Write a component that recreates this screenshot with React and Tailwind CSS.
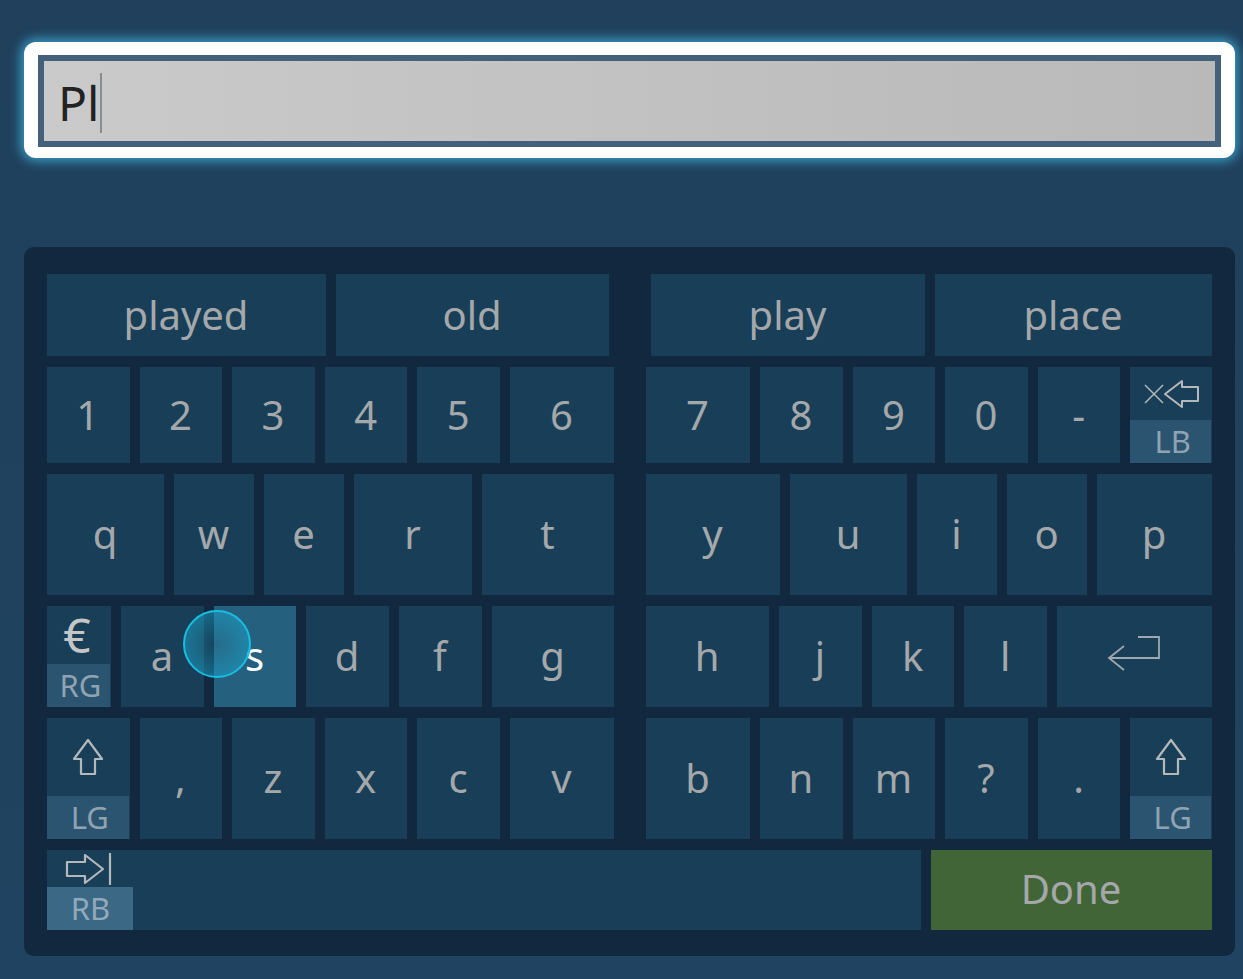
const font = { fontFamily: '"Noto Sans", sans-serif' };

const BackspaceIcon = () => (
  <svg width="56" height="32" viewBox="0 0 56 32" fill="none" stroke="#b4b8bb" strokeWidth="2">
    <path d="M2 7 L20 25 M20 7 L2 25" strokeWidth="1.5" />
    <path d="M22 16 L39 3 V9 H55 V23 H39 V29 Z" strokeLinejoin="round" />
  </svg>
);

const ShiftIcon = () => (
  <svg width="32" height="38" viewBox="0 0 32 38" fill="none" stroke="#b4b8bb" strokeWidth="2.2">
    <path d="M16 2 L30 21 H23 V36 H9 V21 H2 Z" strokeLinejoin="round" />
  </svg>
);

const TabIcon = () => (
  <svg width="48" height="32" viewBox="0 0 48 32" fill="none" stroke="#b4b8bb" strokeWidth="2.2">
    <path d="M2 9 H20 V2 L38 16 L20 30 V23 H2 Z" strokeLinejoin="round" />
    <path d="M45 0 V32" />
  </svg>
);

const EnterIcon = () => (
  <svg width="54" height="36" viewBox="0 0 54 36" fill="none" stroke="#9fa8ae" strokeWidth="1.8">
    <path d="M31 2 H52 V23 H2 M17 11 L2 23 L17 35" />
  </svg>
);

const Key = ({ w, label, className = "pb-[1px]" }) => (
  <div className={`${w} flex items-center justify-center bg-[#193f58] pr-[1px] text-[40px] leading-none text-[#a5a8aa] ${className}`}>
    {label}
  </div>
);

// key with a gamepad hint strip along the bottom
const HintKey = ({ w, icon, hint }) => (
  <div className={`${w} flex flex-col bg-[#193f58]`}>
    <div className="flex flex-1 items-center justify-center">{icon}</div>
    <div className="mr-[1px] flex h-[43px] items-center justify-center bg-[#2b5470] pl-[4px] text-[31px] leading-none text-[#8fa3b2]">
      {hint}
    </div>
  </div>
);

const Half = ({ children }) => <div className="flex gap-[10px]">{children}</div>;

export default function App() {
  return (
    <div
      style={font}
      className="h-[979px] w-[1243px] overflow-hidden bg-gradient-to-b from-[#20405c] to-[#1f4360] pl-[24px] pr-[8px] pt-[42px]"
    >
      <div className="h-[116px] rounded-[12px] bg-white px-[14px] py-[13px] shadow-[0_0_12px_3px_#3b9fc7]">
        <div className="h-[92px] border-[6px] border-[#45607a]">
          <div className="flex h-full items-center bg-gradient-to-r from-[#cacaca] to-[#b9b9b9] pl-[14px] pt-[4px] text-[48px] leading-none text-[#222]">
            <span>Pl</span>
            <div className="ml-[1px] h-[60px] w-[2px] bg-[#8a8d90]" />
          </div>
        </div>
      </div>

      <div className="relative mt-[89px] flex h-[709px] flex-col gap-[11px] rounded-[10px] bg-[#11283f] px-[23px] pt-[27px]">
        <div className="flex h-[82px] justify-between">
          <Half>
            <Key w="w-[279px]" label="played" />
            <Key w="w-[273px]" label="old" />
          </Half>
          <Half>
            <Key w="w-[274px]" label="play" />
            <Key w="w-[277px]" label="place" />
          </Half>
        </div>

        <div className="flex h-[96px] justify-between">
          <Half>
            <Key w="w-[82.6px]" label="1" />
            <Key w="w-[82.6px]" label="2" />
            <Key w="w-[82.6px]" label="3" />
            <Key w="w-[82.6px]" label="4" />
            <Key w="w-[82.6px]" label="5" />
            <Key w="w-[104px]" label="6" />
          </Half>
          <Half>
            <Key w="w-[104px]" label="7" />
            <Key w="w-[82.6px]" label="8" />
            <Key w="w-[82.6px]" label="9" />
            <Key w="w-[82.6px]" label="0" />
            <Key w="w-[82.6px]" label="-" />
            <HintKey w="w-[81.6px]" icon={<BackspaceIcon />} hint="LB" />
          </Half>
        </div>

        <div className="flex h-[121px] justify-between">
          <Half>
            <Key w="w-[117px]" label="q" />
            <Key w="w-[80px]" label="w" />
            <Key w="w-[80px]" label="e" />
            <Key w="w-[118px]" label="r" />
            <Key w="w-[132px]" label="t" />
          </Half>
          <Half>
            <Key w="w-[134px]" label="y" />
            <Key w="w-[117px]" label="u" />
            <Key w="w-[80px]" label="i" />
            <Key w="w-[80px]" label="o" />
            <Key w="w-[115px]" label="p" />
          </Half>
        </div>

        <div className="flex h-[101px] justify-between">
          <Half>
            <HintKey
              w="w-[64px]"
              icon={<span className="pr-[4px] text-[48px] leading-none text-[#c4c6c8]">€</span>}
              hint="RG"
            />
            <Key w="w-[83px]" label="a" />
            <Key w="w-[82px]" label="s" className="bg-[#25607f] pb-[1px] !text-white" />
            <Key w="w-[83px]" label="d" />
            <Key w="w-[83px]" label="f" />
            <Key w="w-[122px]" label="g" />
          </Half>
          <Half>
            <Key w="w-[123px]" label="h" />
            <Key w="w-[82.6px]" label="j" />
            <Key w="w-[82.6px]" label="k" />
            <Key w="w-[82.6px]" label="l" />
            <Key w="w-[155px]" label={<EnterIcon />} className="pb-[8px]" />
          </Half>
        </div>

        <div className="flex h-[121px] justify-between">
          <Half>
            <HintKey w="w-[82.6px]" icon={<ShiftIcon />} hint="LG" />
            <Key w="w-[82.6px]" label="," />
            <Key w="w-[82.6px]" label="z" />
            <Key w="w-[82.6px]" label="x" />
            <Key w="w-[82.6px]" label="c" />
            <Key w="w-[104px]" label="v" />
          </Half>
          <Half>
            <Key w="w-[104px]" label="b" />
            <Key w="w-[82.6px]" label="n" />
            <Key w="w-[82.6px]" label="m" />
            <Key w="w-[82.6px]" label="?" />
            <Key w="w-[82.6px]" label="." />
            <HintKey w="w-[81.6px]" icon={<ShiftIcon />} hint="LG" />
          </Half>
        </div>

        <div className="flex h-[80px] gap-[10px]">
          <div className="flex w-[874px] flex-col bg-[#193f58]">
            <div className="flex h-[37px] w-[84px] items-center justify-center">
              <TabIcon />
            </div>
            <div className="flex h-[43px] w-[86px] items-center justify-center bg-[#3a6885] pl-[1px] text-[31px] leading-none text-[#92a9ba]">
              RB
            </div>
          </div>
          <Key w="flex-1" label="Done" className="bg-[#426538] pb-[3px]" />
        </div>

        {/* controller cursor */}
        <div className="absolute left-[159px] top-[363px] h-[68px] w-[68px] rounded-full border-2 border-[#17bfe3] bg-[radial-gradient(circle,rgba(40,140,170,0.25),rgba(25,175,215,0.6))]" />
      </div>
    </div>
  );
}
